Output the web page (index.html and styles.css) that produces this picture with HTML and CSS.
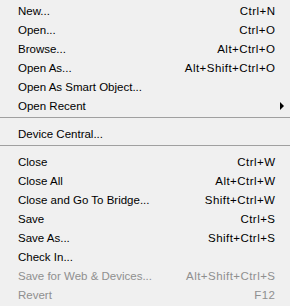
FILE: index.html
```html
<!DOCTYPE html>
<html>
<head>
<meta charset="utf-8">
<link rel="stylesheet" href="styles.css">
</head>
<body>
<div class="menu">
  <div class="item"><span class="label">New...</span><span class="key">Ctrl+N</span><span class="sub"></span></div>
  <div class="item"><span class="label">Open...</span><span class="key">Ctrl+O</span><span class="sub"></span></div>
  <div class="item"><span class="label">Browse...</span><span class="key">Alt+Ctrl+O</span><span class="sub"></span></div>
  <div class="item"><span class="label">Open As...</span><span class="key">Alt+Shift+Ctrl+O</span><span class="sub"></span></div>
  <div class="item"><span class="label">Open As Smart Object...</span><span class="key"></span><span class="sub"></span></div>
  <div class="item"><span class="label">Open Recent</span><span class="key"></span><span class="sub"><span class="arrow"></span></span></div>
  <div class="sep"></div>
  <div class="item"><span class="label">Device Central...</span><span class="key"></span><span class="sub"></span></div>
  <div class="sep"></div>
  <div class="item"><span class="label">Close</span><span class="key">Ctrl+W</span><span class="sub"></span></div>
  <div class="item"><span class="label">Close All</span><span class="key">Alt+Ctrl+W</span><span class="sub"></span></div>
  <div class="item"><span class="label">Close and Go To Bridge...</span><span class="key">Shift+Ctrl+W</span><span class="sub"></span></div>
  <div class="item"><span class="label">Save</span><span class="key">Ctrl+S</span><span class="sub"></span></div>
  <div class="item"><span class="label">Save As...</span><span class="key">Shift+Ctrl+S</span><span class="sub"></span></div>
  <div class="item"><span class="label">Check In...</span><span class="key"></span><span class="sub"></span></div>
  <div class="item disabled"><span class="label">Save for Web &amp; Devices...</span><span class="key">Alt+Shift+Ctrl+S</span><span class="sub"></span></div>
  <div class="item disabled"><span class="label">Revert</span><span class="key">F12</span><span class="sub"></span></div>
</div>
</body>
</html>
```
FILE: styles.css
```css
html, body {
  margin: 0;
  padding: 0;
  background: #f0f0f0;
}
.menu {
  width: 290px;
  height: 306px;
  padding-top: 1px;
  box-sizing: border-box;
  font-family: "Liberation Sans", Arial, sans-serif;
  font-size: 11.5px;
  color: #000;
  overflow: hidden;
}
.item {
  display: flex;
  align-items: center;
  height: 19px;
  padding-left: 18px;
  white-space: nowrap;
}
.label {
  flex: 1;
}
.key {
  text-align: right;
  letter-spacing: 0.45px;
  margin-right: -0.45px;
}
.sub {
  width: 15px;
  display: flex;
  align-items: center;
}
.arrow {
  margin-left: 5px;
  width: 0;
  height: 0;
  border-top: 4px solid transparent;
  border-bottom: 4px solid transparent;
  border-left: 4px solid #000;
}
.sep {
  height: 1px;
  background: #a0a0a0;
  margin: 2px 0 6px;
}
.disabled {
  color: #8f8f8f;
}
```
